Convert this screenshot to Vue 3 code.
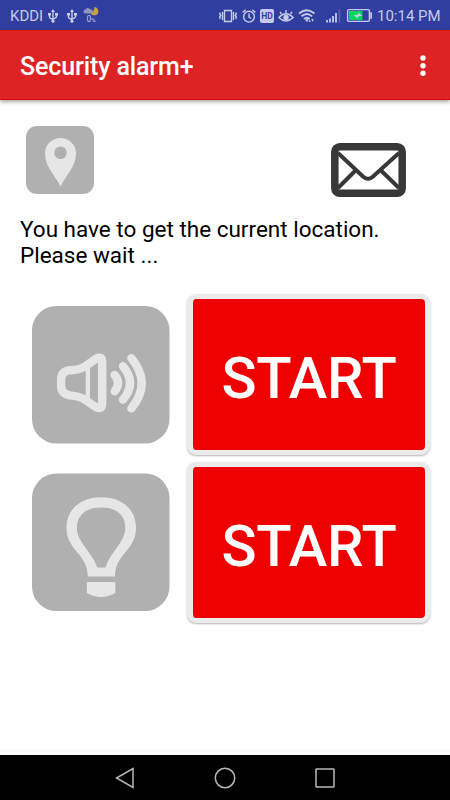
<template>
    <div class="screen">
        <header class="status">
            <div class="status-left">
                <span class="carrier">KDDI</span>
                <svg v-for="n in 2" :key="n" class="usb" viewBox="0 0 10 14">
                    <path d="M5 2v11M1.500 5v3q0 1.500 3.500 2.500M8.500 5v2.500q0 1.500-3.500 2.500" />
                    <path class="fill" d="M5 0l2 3H3zM0 4h3v2.500H0zM7 4h3v2.500H7z" />
                    <circle class="fill" cx="5" cy="12.200" r="1.600" />
                </svg>
                <div class="weather">
                    <svg viewBox="0 0 16 8">
                        <path class="moon" d="M11 .3A4 4 0 1 1 7.500 5.500Q12 5 11 .3z" />
                        <path class="cloud" d="M2.500 6.500a2 2 0 0 1 0-4Q4.500-.3 7 2.200q3-.2 3 2.200 0 2.100-2.300 2.100z" />
                    </svg>
                    <span>0<small>%</small></span>
                </div>
            </div>
            <div class="status-right">
                <svg class="vibrate" viewBox="0 0 18 14">
                    <path d="M5.500 1.500h7v11h-7zM3.500 3v8M14.500 3v8M1.200 3.500l-.5 1.500 1 1.500-1 1.500.5 2M16.800 3.500l.5 1.500-1 1.500 1 1.500-.5 2" />
                </svg>
                <svg class="alarm" viewBox="0 0 14 14">
                    <circle cx="7" cy="7.700" r="5.400" />
                    <path d="M.6 3.500L3.600.9M13.400 3.500L10.400.9M7 4.500v3.500l2.300 1.500" />
                </svg>
                <span class="hd">HD</span>
                <svg class="eye" viewBox="0 0 16 14">
                    <path d="M.8 8.500Q8 1 15.200 8.500 8 15.500.8 8.500zM8 4V1M3.500 5L2 2.800M12.500 5L14 2.800" />
                    <circle class="fill" cx="8" cy="8.500" r="2.700" />
                </svg>
                <svg class="wifi" viewBox="0 0 18 14">
                    <path d="M1 4.500Q9-2 16.500 4.500M3.500 7.300Q9 2.700 14 7.300M6 10Q9 7.500 11.500 10" />
                    <path class="fill" d="M7.200 11l1.700-1.300 1.700 1.300-1.700 2zM11.500 10l1.200 3H10.800zM14.500 13l-1.200-3h2.400z" />
                </svg>
                <svg class="signal" viewBox="0 0 15 14">
                    <path d="M1 11v2.500M4 9.500v4M7 7v6.500M10 4v9.500" />
                    <path class="dim" d="M13.500.5v13" />
                </svg>
                <svg class="battery" viewBox="0 0 25 13">
                    <rect x=".6" y=".6" width="21.800" height="11.800" rx="1.300" />
                    <path class="charge" d="M2 2h13.500v9H2z" />
                    <path class="fill" d="M23.300 3.300h1.700v6.400h-1.700zM6.500 6.300l4.500-.8V3.500l4.500 3-4.500 1v2z" />
                </svg>
                <span class="clock">10:14 PM</span>
            </div>
        </header>

        <div class="appbar">
            <h1>Security alarm+</h1>
            <svg viewBox="0 0 6 22">
                <circle v-for="y in [3, 10.700, 18.300]" :key="y" cx="3" :cy="y" r="2.700" />
            </svg>
        </div>

        <main>
            <div class="top">
                <svg class="location" viewBox="0 0 68 68">
                    <rect class="tile" width="68" height="68" rx="11" />
                    <path class="light" fill-rule="evenodd" d="M34.500 60.500C29 49 19 41 19 27.500a15.500 15.500 0 0 1 31 0C50 41 40 49 34.500 60.500zM34.500 20.500a6.300 6.300 0 1 0 0 12.600 6.300 6.300 0 0 0 0-12.600z" />
                </svg>
                <svg class="mail" viewBox="0 0 75 54">
                    <rect x="3.800" y="3.800" width="67.400" height="46.400" rx="5" />
                    <path d="M7 10l25.500 24q4.500 3.500 9 0L68 10M24.500 27.500L7 45M50 27.500L68 45" />
                </svg>
            </div>

            <p>You have to get the current location.<br>Please wait ...</p>

            <div class="row">
                <svg class="big" viewBox="37 33 411 411">
                    <rect class="tile" x="37" y="33" width="411" height="411" rx="73" />
                    <path class="horn" d="M150 225Q180 225 198 212L229 190Q247 181 247 201V324Q247 344 229 336L198 315Q180 302 150 300Q124 295 124 272V253Q124 229 150 225z" />
                    <path class="divider" d="M204 210v107" />
                    <path class="wave" d="M284 239q20 24 0 49M309 213q42 50 0 100M334 189q62 75 0 150" />
                </svg>
                <button>START</button>
            </div>
            <div class="row">
                <svg class="big" viewBox="37 31.500 411 411">
                    <rect class="tile" x="37" y="30" width="411" height="411" rx="73" />
                    <path class="light" fill-rule="evenodd" d="M204 338C204 270 140 260 140 193C140 135 185 101 244 101S348 135 348 193C348 260 285 270 285 338zM232 311H257C270 266 316 235 316 193C316 154 290 132 244 132S171 154 171 193C171 235 218 266 232 311z" />
                    <path class="light" d="M201 354h85v33q-42 24-85 0z" />
                </svg>
                <button>START</button>
            </div>
        </main>

        <nav>
            <svg viewBox="0 0 22 22"><path d="M19 1.500v19L2.500 11z" /></svg>
            <svg viewBox="0 0 22 22"><circle cx="11" cy="11" r="9.700" /></svg>
            <svg viewBox="0 0 22 22"><rect x="2" y="2" width="18" height="18" rx=".5" /></svg>
        </nav>
    </div>
</template>

<script setup>
</script>

<style>
body {
    margin: 0;
}
</style>

<style scoped>
.screen {
    display: flex;
    flex-direction: column;
    width: 450px;
    height: 800px;
    overflow: hidden;
    background: #fff;
    font-family: Roboto, sans-serif;
}

svg {
    display: block;
    flex: none;
    overflow: visible;
}

.status {
    display: flex;
    justify-content: space-between;
    box-sizing: border-box;
    height: 30px;
    padding: 1px 10px 0;
    background: #303f9f;
    color: #c5cae9;
    font-size: 15px;
}

.status-left,
.status-right {
    display: flex;
    align-items: center;
}

.status svg {
    fill: none;
    stroke: #c5cae9;
    stroke-width: 1.4;
}

.status .fill {
    fill: #c5cae9;
    stroke: none;
}

.carrier {
    width: 38px;
}

.usb {
    width: 10px;
    height: 14px;
    margin-right: 9px;
}

.weather {
    display: flex;
    flex-direction: column;
    align-items: center;
    margin-left: -3px;
    font-size: 8.5px;
    line-height: 8px;
}

.weather svg {
    width: 16px;
    height: 8px;
}

.weather small {
    font-size: 6px;
}

.weather .moon {
    fill: #c9a23c;
    stroke: none;
}

.weather .cloud {
    fill: #8f96bd;
    stroke: none;
}

.vibrate {
    width: 18px;
    height: 14px;
    margin-right: 5px;
}

.alarm {
    width: 14px;
    height: 14px;
    margin-right: 4px;
}

.hd {
    width: 14px;
    margin-right: 4px;
    border-radius: 2px;
    background: #c5cae9;
    color: #303f9f;
    font-size: 8.5px;
    font-weight: 700;
    line-height: 14px;
    text-align: center;
}

.eye {
    width: 16px;
    height: 14px;
    margin-right: 4px;
}

.wifi {
    width: 18px;
    height: 14px;
    margin-right: 10px;
}

.status .wifi {
    stroke-width: 1.8;
}

.signal {
    width: 15px;
    height: 14px;
    margin-right: 6px;
}

.status .signal path {
    stroke-width: 1.8;
}

.status .signal .dim {
    stroke: #5360b0;
}

.battery {
    width: 25px;
    height: 13px;
    margin-right: 5px;
}

.status .charge {
    fill: #00d65b;
    stroke: none;
}

.clock {
    width: 63px;
    white-space: nowrap;
}

.appbar {
    z-index: 1;
    display: flex;
    align-items: center;
    justify-content: space-between;
    box-sizing: border-box;
    height: 70px;
    padding: 2px 24.5px 0 20px;
    border-top: 1px solid #e51c00;
    border-bottom: 1px solid #d50a0a;
    background: #dd2323;
    box-shadow: 0 2px 4px rgba(0, 0, 0, .35);
    color: #fff;
}

.appbar h1 {
    margin: 0;
    font-size: 25px;
    font-weight: 500;
    letter-spacing: -.12px;
}

.appbar svg {
    width: 6px;
    height: 22px;
    fill: #fff;
}

main {
    flex: 1;
    padding: 26px 20px 0;
}

.tile {
    fill: #b0b0b0;
}

.light {
    fill: #e6e6e6;
}

.top {
    display: flex;
    align-items: flex-start;
    justify-content: space-between;
    height: 90px;
    padding: 0 24px 0 6px;
}

.location {
    width: 68px;
    height: 68px;
}

.mail {
    width: 75px;
    height: 54px;
    margin-top: 17px;
    fill: none;
    stroke: #383838;
    stroke-width: 7.5;
}

.mail path {
    stroke-width: 4;
}

p {
    height: 78px;
    margin: 0;
    color: #000;
    font-size: 22.5px;
    line-height: 26.4px;
}

.row {
    display: flex;
    justify-content: space-between;
    height: 168px;
    padding-left: 12px;
}

.big {
    width: 137.5px;
    height: 137.5px;
    margin-top: 12px;
}

.horn,
.wave {
    fill: none;
    stroke: #e6e6e6;
    stroke-width: 25;
    stroke-linecap: round;
}

.divider {
    stroke: #e6e6e6;
    stroke-width: 13;
}

button {
    box-sizing: border-box;
    width: 243px;
    height: 161px;
    padding: 6px 0 0;
    border: 5px solid #ebebeb;
    border-left-width: 6px;
    border-radius: 9px;
    background: #ee0000;
    box-shadow: 0 1px 2px rgba(0, 0, 0, .3);
    color: #fff;
    font: 500 58px Roboto, sans-serif;
    letter-spacing: -.2px;
}

nav {
    display: flex;
    align-items: center;
    justify-content: center;
    gap: 78px;
    box-sizing: border-box;
    height: 51px;
    border-top: 6px solid #fafafa;
    background: #000;
}

nav svg {
    width: 22px;
    height: 22px;
    fill: none;
    stroke: #b8b8b8;
    stroke-width: 1.5;
}
</style>
